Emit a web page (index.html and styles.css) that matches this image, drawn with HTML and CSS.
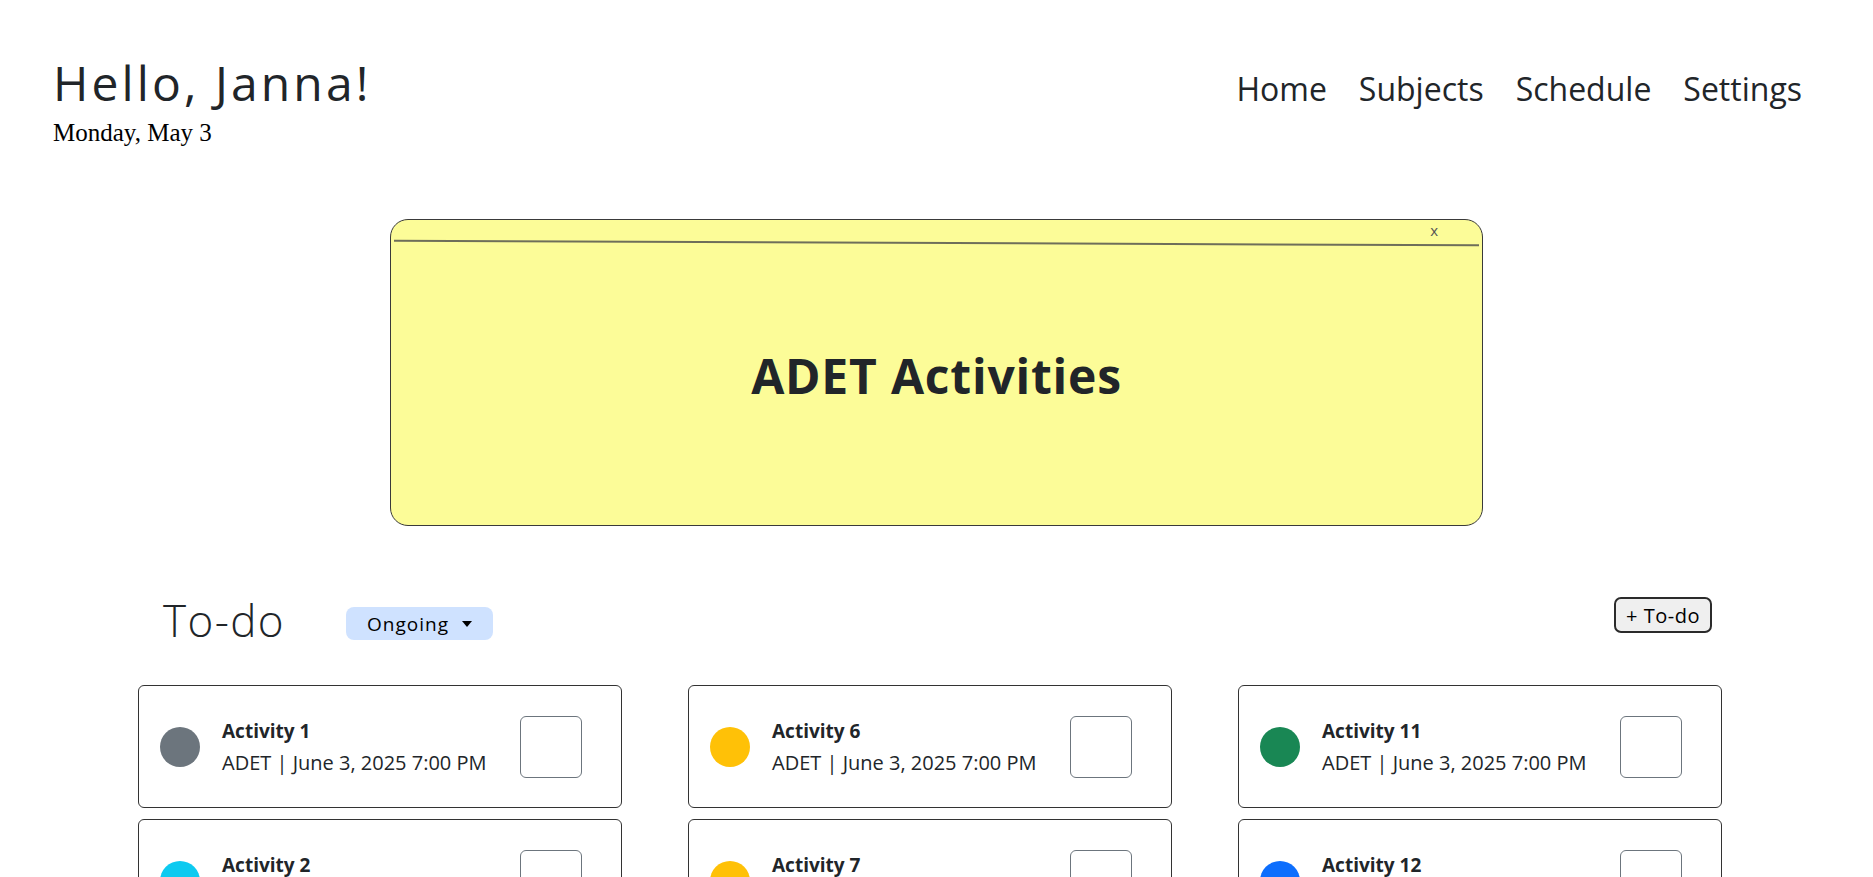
FILE: index.html
```html
<!DOCTYPE html>
<html lang="en">
<head>
<meta charset="utf-8">
<title>Dashboard</title>
<link rel="stylesheet" href="styles.css">
</head>
<body>
<header class="topbar">
  <div class="greeting">
    <h1 class="hello">Hello, Janna!</h1>
    <p class="date">Monday, May 3</p>
  </div>
  <nav class="nav">
    <a href="#" class="nav-link">Home</a>
    <a href="#" class="nav-link">Subjects</a>
    <a href="#" class="nav-link">Schedule</a>
    <a href="#" class="nav-link">Settings</a>
  </nav>
</header>

<section class="sticky">
  <div class="sticky-head"><span class="sticky-close">x</span></div>
  <div class="sticky-rule"></div>
  <h2 class="sticky-title">ADET Activities</h2>
</section>

<section class="todo">
  <div class="todo-head">
    <h3 class="todo-title">To-do</h3>
    <span class="badge">Ongoing <span class="caret"></span></span>
    <button class="add-btn">+ To-do</button>
  </div>
  <div class="cards">
    <div class="card"><span class="dot dot-gray"></span><div class="card-text"><div class="card-title">Activity 1</div><div class="card-sub">ADET | June 3, 2025 7:00 PM</div></div><span class="check"></span></div>
    <div class="card"><span class="dot dot-cyan"></span><div class="card-text"><div class="card-title">Activity 2</div><div class="card-sub">ADET | June 3, 2025 7:00 PM</div></div><span class="check"></span></div>
    <div class="card"><span class="dot dot-red"></span><div class="card-text"><div class="card-title">Activity 3</div><div class="card-sub">ADET | June 3, 2025 7:00 PM</div></div><span class="check"></span></div>
    <div class="card"><span class="dot dot-green"></span><div class="card-text"><div class="card-title">Activity 4</div><div class="card-sub">ADET | June 3, 2025 7:00 PM</div></div><span class="check"></span></div>
    <div class="card"><span class="dot dot-blue"></span><div class="card-text"><div class="card-title">Activity 5</div><div class="card-sub">ADET | June 3, 2025 7:00 PM</div></div><span class="check"></span></div>
    <div class="card"><span class="dot dot-yellow"></span><div class="card-text"><div class="card-title">Activity 6</div><div class="card-sub">ADET | June 3, 2025 7:00 PM</div></div><span class="check"></span></div>
    <div class="card"><span class="dot dot-yellow"></span><div class="card-text"><div class="card-title">Activity 7</div><div class="card-sub">ADET | June 3, 2025 7:00 PM</div></div><span class="check"></span></div>
    <div class="card"><span class="dot dot-gray"></span><div class="card-text"><div class="card-title">Activity 8</div><div class="card-sub">ADET | June 3, 2025 7:00 PM</div></div><span class="check"></span></div>
    <div class="card"><span class="dot dot-cyan"></span><div class="card-text"><div class="card-title">Activity 9</div><div class="card-sub">ADET | June 3, 2025 7:00 PM</div></div><span class="check"></span></div>
    <div class="card"><span class="dot dot-red"></span><div class="card-text"><div class="card-title">Activity 10</div><div class="card-sub">ADET | June 3, 2025 7:00 PM</div></div><span class="check"></span></div>
    <div class="card"><span class="dot dot-green"></span><div class="card-text"><div class="card-title">Activity 11</div><div class="card-sub">ADET | June 3, 2025 7:00 PM</div></div><span class="check"></span></div>
    <div class="card"><span class="dot dot-blue"></span><div class="card-text"><div class="card-title">Activity 12</div><div class="card-sub">ADET | June 3, 2025 7:00 PM</div></div><span class="check"></span></div>
    <div class="card"><span class="dot dot-yellow"></span><div class="card-text"><div class="card-title">Activity 13</div><div class="card-sub">ADET | June 3, 2025 7:00 PM</div></div><span class="check"></span></div>
    <div class="card"><span class="dot dot-gray"></span><div class="card-text"><div class="card-title">Activity 14</div><div class="card-sub">ADET | June 3, 2025 7:00 PM</div></div><span class="check"></span></div>
    <div class="card"><span class="dot dot-cyan"></span><div class="card-text"><div class="card-title">Activity 15</div><div class="card-sub">ADET | June 3, 2025 7:00 PM</div></div><span class="check"></span></div>
  </div>
</section>
</body>
</html>
```

FILE: styles.css
```css
* { box-sizing: border-box; }

body {
  margin: 0;
  background: #ffffff;
  color: #212529;
  font-family: "Open Sans", "Noto Sans", sans-serif;
}

.topbar {
  display: flex;
  justify-content: space-between;
  align-items: flex-start;
  padding: 54px 71px 0 53px;
}

.hello {
  margin: 0;
  font-size: 48px;
  font-weight: 400;
  line-height: 1.2;
  letter-spacing: 3.1px;
  color: #212529;
}

.date {
  margin: 7px 0 0;
  font-family: "Liberation Serif", "Times New Roman", serif;
  font-size: 25px;
  line-height: 1.15;
  color: #000;
}

.nav {
  display: flex;
  gap: 32px;
  margin-top: 16px;
}

.nav-link {
  font-size: 32px;
  line-height: 1.2;
  font-weight: 400;
  color: #212529;
  text-decoration: none;
}

.sticky {
  width: 1093px;
  height: 307px;
  margin: 72px auto 0;
  background: #fcfc98;
  border: 1px solid #3a3a3a;
  border-radius: 18px;
  padding: 0 3px;
}

.sticky-head {
  display: flex;
  justify-content: flex-end;
  height: 22px;
  padding-right: 41px;
}

.sticky-close {
  font-size: 15px;
  line-height: 21px;
  color: #555;
}

.sticky-rule {
  height: 2px;
  background: #6e6e5a;
  transform: rotate(0.24deg);
}

.sticky-title {
  margin: 103px 0 0;
  text-align: center;
  font-size: 48px;
  font-weight: 700;
  line-height: 1.2;
  letter-spacing: 0.8px;
  color: #212529;
}

.todo {
  margin: 68px 151px 0 138px;
}

.todo-head {
  display: flex;
  align-items: flex-start;
  padding: 0 10px 0 25px;
}

.todo-title {
  margin: 0;
  font-size: 44px;
  font-weight: 300;
  line-height: 1.2;
  letter-spacing: 1.4px;
  color: #212529;
}

.badge {
  display: flex;
  align-items: center;
  gap: 13px;
  margin: 13px 0 0 61px;
  height: 33px;
  padding: 0 21px;
  background: #cfe2ff;
  border-radius: 8px;
  font-size: 19px;
  letter-spacing: 1px;
  color: #000;
}

.caret {
  width: 0;
  height: 0;
  border-left: 5px solid transparent;
  border-right: 5px solid transparent;
  border-top: 6px solid #000;
}

.add-btn {
  margin: 3px 0 0 auto;
  width: 98px;
  height: 36px;
  padding: 0;
  background: #efefef;
  border: 2px solid #2b2b2b;
  border-radius: 7px;
  font-family: "Open Sans", "Noto Sans", sans-serif;
  font-size: 20px;
  letter-spacing: 0.5px;
  color: #000;
}

.cards {
  display: grid;
  grid-template-columns: repeat(3, 484px);
  grid-template-rows: repeat(5, 123px);
  grid-auto-flow: column;
  column-gap: 66px;
  row-gap: 11px;
  margin-top: 38px;
}

.card {
  display: flex;
  align-items: center;
  border: 1px solid #333;
  border-radius: 6px;
  padding: 0 39px 0 21px;
}

.dot {
  width: 40px;
  height: 40px;
  border-radius: 50%;
  flex: none;
  margin-right: 22px;
}

.dot-gray { background: #6c757d; }
.dot-yellow { background: #ffc107; }
.dot-green { background: #198754; }
.dot-cyan { background: #0dcaf0; }
.dot-blue { background: #0d6efd; }
.dot-red { background: #dc3545; }

.card-text {
  flex: 1;
  line-height: 31px;
  color: #212529;
}

.card-title {
  font-size: 19px;
  font-weight: 700;
}

.card-sub {
  font-size: 20px;
  font-weight: 400;
}

.check {
  width: 62px;
  height: 62px;
  flex: none;
  border: 1px solid #6c757d;
  border-radius: 6px;
  background: #fff;
}
```
